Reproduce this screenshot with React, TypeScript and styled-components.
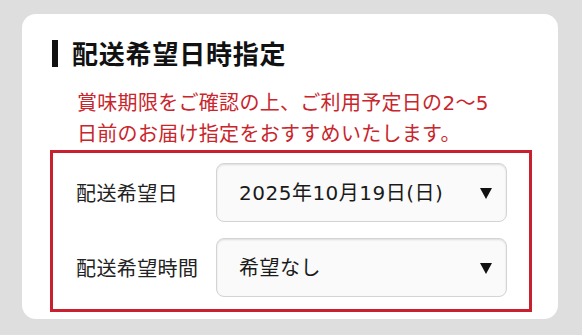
import styled, { createGlobalStyle } from "styled-components";

const GlobalStyle = createGlobalStyle`
  html, body {
    margin: 0;
    padding: 0;
    background: #dedede;
  }
  body {
    font-family: "Noto Sans CJK JP", "Noto Sans", sans-serif;
  }
`;

const Page = styled.div`
  width: 582px;
  height: 335px;
  padding: 14px 24px 0 22px;
  box-sizing: border-box;
  overflow: hidden;
`;

const Card = styled.section`
  width: 536px;
  height: 305px;
  background: #ffffff;
  border-radius: 14px;
  padding: 24px 26px 0 28px;
  box-sizing: border-box;
`;

const TitleRow = styled.div`
  display: flex;
  align-items: center;
  height: 30px;
  padding-left: 2px;
`;

const TitleBar = styled.span`
  width: 6px;
  height: 27px;
  background: #111111;
  margin-right: 14px;
`;

const Title = styled.h2`
  margin: 0;
  font-size: 26px;
  line-height: 30px;
  font-weight: 700;
  letter-spacing: 0.8px;
  color: #111111;
`;

const Notice = styled.p`
  margin: 20px 0 0 0;
  padding-left: 27px;
  font-family: "DejaVu Sans", "Noto Sans CJK JP", sans-serif;
  font-size: 20px;
  line-height: 31px;
  color: #c9252c;
  letter-spacing: 0.3px;
`;

const FrameBox = styled.div`
  border: 3px solid #c8202e;
  padding: 10px 22px 12px 23px;
  display: grid;
  grid-template-columns: 140px 1fr;
  grid-auto-rows: 59px;
  row-gap: 16px;
  align-items: center;
`;

const Label = styled.label`
  font-size: 20px;
  line-height: 28px;
  color: #222222;
  letter-spacing: 0.4px;
`;

const SelectBox = styled.div`
  height: 59px;
  box-sizing: border-box;
  border: 1px solid #d4d4d4;
  border-radius: 8px;
  background: #fafafa;
  box-shadow: inset 0 1px 2px rgba(0, 0, 0, 0.12);
  display: flex;
  align-items: center;
  justify-content: space-between;
  padding: 0 14px 0 22px;
`;

const SelectValue = styled.span`
  font-family: "DejaVu Sans", "Noto Sans CJK JP", sans-serif;
  font-size: 20px;
  line-height: 28px;
  color: #1a1a1a;
  letter-spacing: 0.5px;
`;

const Caret = styled.span`
  width: 0;
  height: 0;
  border-left: 6.5px solid transparent;
  border-right: 6.5px solid transparent;
  border-top: 11px solid #111111;
  margin-top: 1px;
`;

const fields = [
  { label: "配送希望日", value: "2025年10月19日(日)" },
  { label: "配送希望時間", value: "希望なし" },
];

export default function App() {
  return (
    <>
      <GlobalStyle />
      <Page>
        <Card>
          <TitleRow>
            <TitleBar />
            <Title>配送希望日時指定</Title>
          </TitleRow>
          <Notice>
            賞味期限をご確認の上、ご利用予定日の2〜5
            <br />
            日前のお届け指定をおすすめいたします。
          </Notice>
          <FrameBox>
            {fields.map((f) => (
              <>
                <Label key={f.label + "-l"}>{f.label}</Label>
                <SelectBox key={f.label + "-s"}>
                  <SelectValue>{f.value}</SelectValue>
                  <Caret />
                </SelectBox>
              </>
            ))}
          </FrameBox>
        </Card>
      </Page>
    </>
  );
}
